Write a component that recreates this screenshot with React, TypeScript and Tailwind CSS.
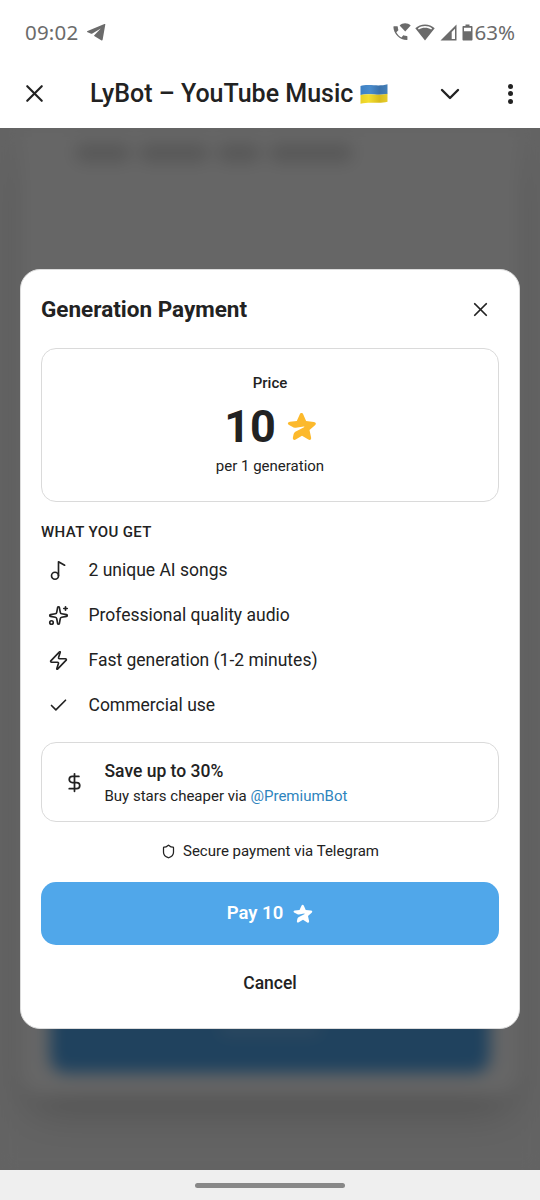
import type { ReactNode } from "react";
import {
  Check,
  ChevronDown,
  DollarSign,
  Music2,
  Shield,
  Sparkles,
  X,
  Zap,
  type LucideIcon,
} from "lucide-react";

const FEATURES: { icon: LucideIcon; label: string }[] = [
  { icon: Music2, label: "2 unique AI songs" },
  { icon: Sparkles, label: "Professional quality audio" },
  { icon: Zap, label: "Fast generation (1-2 minutes)" },
  { icon: Check, label: "Commercial use" },
];

export default function App() {
  return (
    <div className="flex h-[1200px] w-[540px] flex-col overflow-hidden bg-white font-['Roboto',sans-serif] text-[#222222]">
      <StatusBar />
      <AppBar />
      <main className="relative flex-1 overflow-hidden bg-[#f8f8f8]">
        <PageBehind />
        <div className="absolute inset-0 flex items-center justify-center bg-black/60 px-5">
          <PaymentDialog />
        </div>
      </main>
      <div className="flex h-[30px] flex-none items-center justify-center bg-[#efefef]">
        <div className="h-[5px] w-[150px] rounded-full bg-[#888888]" />
      </div>
    </div>
  );
}

function StatusBar() {
  return (
    <div className="flex h-16 flex-none items-center justify-between pl-[25px] pr-[25px] font-['Noto_Sans',sans-serif] text-[20px] text-[#6b6b6b]">
      <div className="flex items-center gap-[9px]">
        <span className="pt-px text-[20.500px] tracking-[0.200px]">09:02</span>
        <svg width="19" height="17" viewBox="0 0 19 17" fill="currentColor">
          <path d="M18.300.6 15.700 15.600c-.1.900-.8 1.100-1.500.7L7.600 12.300c-.6-.4-.6-.8-.1-1.300l6.300-6.600-8.400 5.200c-.4.2-.8.2-1.200.1L.6 8.300c-.8-.3-.8-.9 0-1.200L17.400.1c.7-.2 1 0 .9.500Z" />
        </svg>
      </div>
      <div className="flex items-center">
        {/* wifi call */}
        <svg width="18" height="18" viewBox="0 0 18 18" fill="currentColor" className="mr-[4px]">
          <path d="M1 3.200h3.200c.4 0 .6.200.6.600 0 1 .2 2 .5 2.900.1.300 0 .6-.2.800L3.300 9.300c1.100 2.200 2.900 4 5.100 5.100l1.700-1.800c.2-.2.500-.3.800-.2.900.3 1.900.500 2.900.500.400 0 .6.200.6.600v3c0 .4-.2.600-.6.600C6.800 17.100.4 10.700.4 3.800c0-.4.2-.6.6-.6Z" />
          <path d="M6.600 2.500C9.600-.4 14.700-.4 17.700 2.500L12.200 8.600Z" />
        </svg>
        <svg width="20" height="17" viewBox="0 0 20 17" fill="currentColor" className="mr-[5px]">
          <path
            fillRule="evenodd"
            d="M10 .5C6.200.5 2.800 1.900.3 4.300L10 16.500l9.700-12.200C17.200 1.900 13.800.5 10 .5Zm0 1.600c2.700 0 5.100.8 7.100 2.300l-.9 1.200C14.400 4.400 12.300 3.800 10 3.800s-4.400.6-6.200 1.800L2.900 4.400C4.900 2.900 7.300 2.100 10 2.100Z"
          />
        </svg>
        <svg width="17" height="17" viewBox="0 0 17 17" fill="currentColor" className="mr-[5px]">
          <path fillRule="evenodd" d="M16.500.5v16H.5Zm-1.500 4.200-3.300 3.300v7h3.300Z" />
        </svg>
        <svg width="11" height="17" viewBox="0 0 11 17" fill="currentColor" className="mr-[2px]">
          <path
            fillRule="evenodd"
            d="M3.500.5h4V2h2c.6 0 1 .4 1 1v12.500c0 .6-.4 1-1 1h-8c-.6 0-1-.4-1-1V3c0-.6.4-1 1-1h2ZM2 3.700v3.500h7V3.700Z"
          />
        </svg>
        <span className="text-[20.500px]">63%</span>
      </div>
    </div>
  );
}

function AppBar() {
  return (
    <header className="flex h-16 flex-none items-start">
      <button aria-label="Close" className="ml-[20px] mt-[15px]">
        <X size={29} strokeWidth={1.8} />
      </button>
      <h1 className="ml-[41px] mt-[12px] flex items-center gap-[7px] whitespace-nowrap text-[25px] font-medium leading-[36px]">
        LyBot – YouTube Music
        <UkraineFlag />
      </h1>
      <div className="ml-auto mr-[27px] flex items-center pt-[14px]">
        <button aria-label="Collapse" className="mr-[42px]">
          <ChevronDown size={32} strokeWidth={1.8} />
        </button>
        <button aria-label="Menu" className="flex flex-col gap-[2.500px] pb-px">
          <span className="h-[5px] w-[5px] rounded-full bg-current" />
          <span className="h-[5px] w-[5px] rounded-full bg-current" />
          <span className="h-[5px] w-[5px] rounded-full bg-current" />
        </button>
      </div>
    </header>
  );
}

function UkraineFlag() {
  return (
    <svg width="28" height="20" viewBox="0 0 28 20">
      <defs>
        <linearGradient id="flag-blue" x1="0" x2="1" y1="0" y2="0">
          <stop offset="0" stopColor="#3c80c4" />
          <stop offset=".35" stopColor="#4a8ccc" />
          <stop offset=".7" stopColor="#3b72ac" />
          <stop offset="1" stopColor="#4580b8" />
        </linearGradient>
        <linearGradient id="flag-yellow" x1="0" x2="1" y1="0" y2="0">
          <stop offset="0" stopColor="#e9d026" />
          <stop offset=".3" stopColor="#f4de30" />
          <stop offset=".7" stopColor="#d9bc1c" />
          <stop offset="1" stopColor="#e6cc2c" />
        </linearGradient>
      </defs>
      <path d="M.5 2C4 .8 9 1 14 1.300s9.500.2 13.500-1v9.800C23 11 19 11 14 10.600S5 10 .5 11Z" fill="url(#flag-blue)" />
      <path d="M.5 10.900C5 9.900 9 10.200 14 10.500s9 .3 13.500-.7v8c-4.500 1.200-8.500 1-13.500.9S5 18.600.5 19.700Z" fill="url(#flag-yellow)" />
    </svg>
  );
}

/** The generator form, out of focus under the overlay. */
function PageBehind() {
  return (
    <div className="h-full bg-[#f8f8f8] px-[20px] blur-[8px]">
      <div className="flex h-[967px] flex-col justify-between rounded-b-[24px] bg-white px-[30px] pb-[22px] pt-[16px] shadow-[0_24px_44px_-10px_rgba(0,0,0,0.2)]">
        <div className="ml-[25px] flex h-[18px] gap-[8px]">
          <div className="w-[56px] rounded-full bg-black/15" />
          <div className="w-[70px] rounded-full bg-black/15" />
          <div className="w-[44px] rounded-full bg-black/15" />
          <div className="w-[84px] rounded-full bg-black/15" />
        </div>
        <div className="flex h-[80px] justify-center rounded-[16px] bg-[#50a5eb] pt-[26px]">
          <div className="h-[18px] w-[104px] rounded-full bg-white/15" />
        </div>
      </div>
    </div>
  );
}

function PaymentDialog() {
  return (
    <section className="flex h-[760px] w-full flex-col rounded-[20px] border border-[#dcdcdc] bg-white px-5">
      <div className="mt-[20px] flex h-10 items-center justify-between">
        <h2 className="text-[22.500px] font-bold">Generation Payment</h2>
        <button aria-label="Close dialog" className="flex h-[38px] w-[38px] items-center justify-center pb-px">
          <X size={23} strokeWidth={1.8} />
        </button>
      </div>

      <OutlinedBox className="mt-[18px] flex h-[154px] flex-none flex-col items-center">
        <div className="mt-[23px] text-[15px] font-medium leading-[22px]">Price</div>
        <div className="mt-[8px] flex h-[50px] items-center gap-[11px] pl-px">
          <span className="text-[45px] font-bold leading-[50px]">10</span>
          <StarIcon size={30} className="text-[#fcb92c]" />
        </div>
        <div className="mt-[3px] text-[15px] leading-[22px]">per 1 generation</div>
      </OutlinedBox>

      <h3 className="mt-[19px] text-[15px] font-medium uppercase leading-[22px] tracking-[0.380px]">
        What you get
      </h3>
      <ul className="mt-[5px]">
        {FEATURES.map(({ icon: Icon, label }) => (
          <li key={label} className="flex h-[45px] items-center">
            <span className="flex w-[35px] justify-center">
              <Icon size={21} strokeWidth={1.9} />
            </span>
            <span className="ml-[12.500px] text-[17.500px]">{label}</span>
          </li>
        ))}
      </ul>

      <OutlinedBox className="mt-[14px] flex h-[80px] flex-none items-center">
        <span className="ml-[15px] flex w-[35px] justify-center">
          <DollarSign size={21} strokeWidth={2} />
        </span>
        <div className="ml-[12.500px] pt-px">
          <div className="text-[17.500px] font-medium leading-[26px]">Save up to 30%</div>
          <div className="text-[15px] leading-[24px]">
            Buy stars cheaper via <a className="text-[#2e84bd]">@PremiumBot</a>
          </div>
        </div>
      </OutlinedBox>

      <div className="mt-[18px] flex h-[22px] items-center justify-center gap-[7px] pt-px text-[15px]">
        <Shield size={15} strokeWidth={2} />
        Secure payment via Telegram
      </div>

      <button className="mt-[20px] flex h-[63px] flex-none items-center justify-center gap-[10px] rounded-[15px] bg-[#50a7ea] pt-px text-[18.500px] font-semibold text-white">
        Pay 10
        <StarIcon size={20} />
      </button>
      <button className="mt-[16px] h-[45px] text-[17.500px] font-medium">Cancel</button>
    </section>
  );
}

function OutlinedBox({ className, children }: { className: string; children: ReactNode }) {
  return <div className={`rounded-[15px] border border-[#dadada] ${className}`}>{children}</div>;
}

function StarIcon({ size, className }: { size: number; className?: string }) {
  return (
    <svg width={size} height={size} viewBox="0 0 30 30" fill="currentColor" className={className}>
      <path d="M12.700 2.500c.9-1.900 2.700-1.900 3.600 0l2.800 6.600 7.800.8c2.200.2 2.600 2 1.100 3.300l-5.500 4.800 1.600 7.600c.4 2-1 3-2.700 2l-6.400-3.900-6.300 3.800c-1.700 1-3.200-.1-2.800-2l.7-3.200c.3-1.300 1-2.200 2.200-2.900l8.200-4.100c.6-.4.4-1-.3-.9l-7.800 1.300c-1.400.2-2.600 0-3.600-.9L1.600 12.800C.2 11.500.8 9.900 2.900 9.700l6.900-.6Z" />
    </svg>
  );
}
